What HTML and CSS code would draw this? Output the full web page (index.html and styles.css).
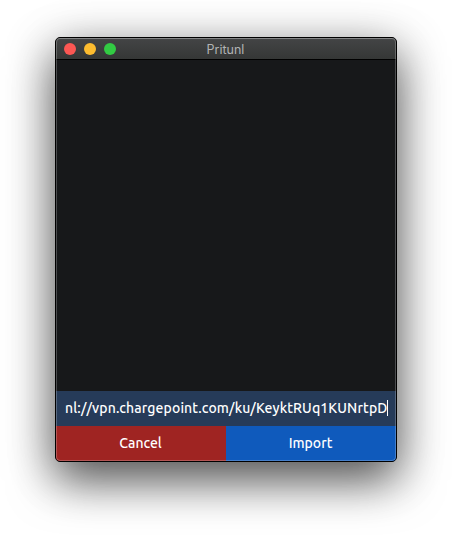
FILE: index.html
```html
<!DOCTYPE html>
<html lang="en"><head><meta charset="utf-8"><title>Pritunl</title><link rel="stylesheet" href="styles.css"></head>
<body>
<main class="window">
<header class="titlebar"><div class="controls"><i class="dot close"></i><i class="dot minimize"></i><i class="dot expand"></i></div><h1 class="title">Pritunl</h1></header>
<section class="content"></section>
<div class="uri"><span class="uri-text">nl://vpn.chargepoint.com/ku/KeyktRUq1KUNrtpD</span><i class="caret"></i></div>
<div class="actions"><button class="button cancel">Cancel</button><button class="button import">Import</button></div>
</main>
</body></html>
```
FILE: styles.css
```css
* { box-sizing: border-box; }
body { margin: 0; height: 535px; overflow: hidden; display: flow-root; background: #fff; font-family: Ubuntu, "Noto Sans", sans-serif; }
.window { position: relative; width: 342px; height: 425px; margin: 37px 0 0 55px; border: 1px solid #000; border-radius: 5px; overflow: hidden; display: flex; flex-direction: column; background: #17181a; box-shadow: 0 19px 46px rgba(0,0,0,.58), 0 9px 50px rgba(0,0,0,.24); }
.window::after { content: ""; position: absolute; inset: 0; border-radius: 4px; border: 1px solid rgba(255,255,255,.23); pointer-events: none; }
.titlebar { height: 22px; display: grid; grid-template-columns: 62px 1fr 62px; align-items: center; background: linear-gradient(#434445, #353736); border-top: 1px solid #606162; border-bottom: 1px solid #000; }
.controls { display: flex; gap: 8px; padding-left: 8px; }
.dot { width: 12px; height: 12px; border-radius: 50%; }
.close { background: #fc5753; }
.minimize { background: #fdbc2f; }
.expand { background: #32cb43; }
.title { margin: 0; padding: 1px 1px 0 0; text-align: center; font: 400 12.5px/18px Inter, sans-serif; color: #b2b3b4; }
.content { flex: 1; }
.uri { height: 35px; padding: 0 0 2px 9px; display: flex; align-items: center; background: #263b59; color: #fff; }
.uri-text { font-size: 14px; font-weight: 500; letter-spacing: .12px; white-space: nowrap; }
.caret { width: 1px; height: 16px; background: #fff; }
.actions { height: 35px; display: grid; grid-template-columns: 1fr 1fr; }
.button { border: 0; padding: 0 1px 2px 0; font: 500 14px Ubuntu, "Noto Sans", sans-serif; color: #fff; }
.cancel { background: #9f2422; }
.import { background: #0f5abc; }
```
